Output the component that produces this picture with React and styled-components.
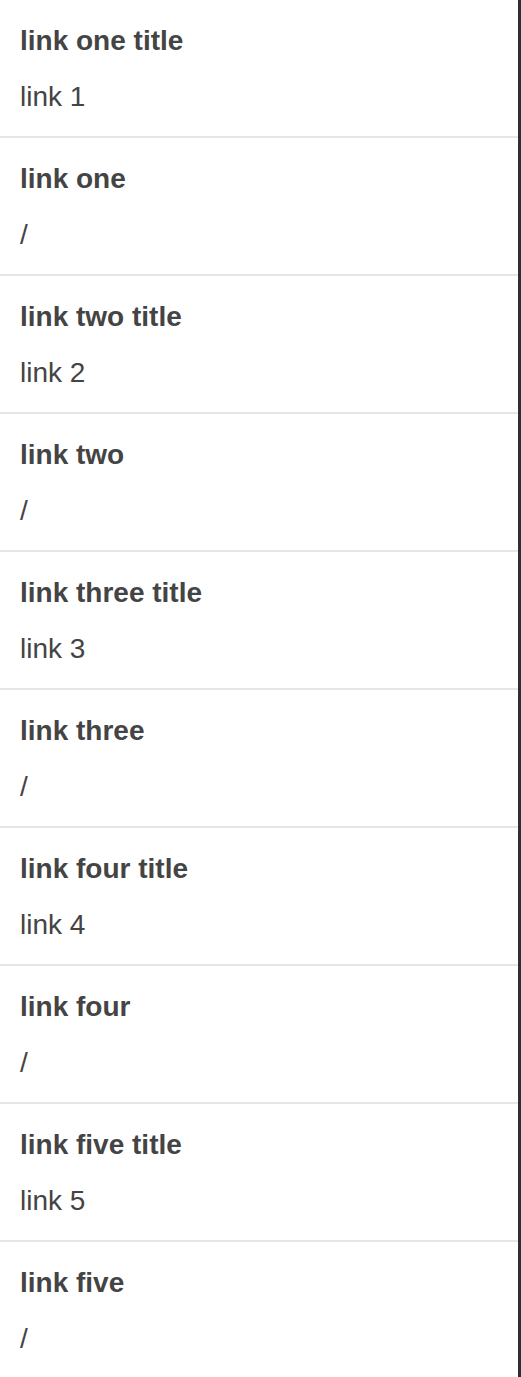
import React from 'react';
import styled, { createGlobalStyle } from 'styled-components';

const GlobalStyle = createGlobalStyle`
  html, body {
    margin: 0;
    padding: 0;
    background: #ffffff;
  }
  body {
    font-family: "Liberation Sans", Arial, Helvetica, sans-serif;
  }
`;

const Panel = styled.div`
  width: 518px;
  min-height: 1377px;
  border-right: 3px solid #2c3034;
  background: #ffffff;
`;

const List = styled.ul`
  list-style: none;
  margin: 0;
  padding: 0;
`;

const Item = styled.li`
  display: flex;
  flex-direction: column;
  gap: 22px;
  padding: 24px 20px 22px;
  border-bottom: 2px solid #e6e6e6;

  &:last-child {
    border-bottom: none;
  }
`;

const Title = styled.div`
  font-size: 28px;
  line-height: 34px;
  font-weight: 700;
  color: #444444;
`;

const Value = styled.div`
  font-size: 28px;
  line-height: 34px;
  font-weight: 400;
  color: #444444;
`;

const links = [
  { title: 'link one title', value: 'link 1' },
  { title: 'link one', value: '/' },
  { title: 'link two title', value: 'link 2' },
  { title: 'link two', value: '/' },
  { title: 'link three title', value: 'link 3' },
  { title: 'link three', value: '/' },
  { title: 'link four title', value: 'link 4' },
  { title: 'link four', value: '/' },
  { title: 'link five title', value: 'link 5' },
  { title: 'link five', value: '/' },
];

const App = () => {
  return (
    <>
      <GlobalStyle />
      <Panel>
        <List>
          {links.map((link, index) => (
            <Item key={index}>
              <Title>{link.title}</Title>
              <Value>{link.value}</Value>
            </Item>
          ))}
        </List>
      </Panel>
    </>
  );
};

export default App;
